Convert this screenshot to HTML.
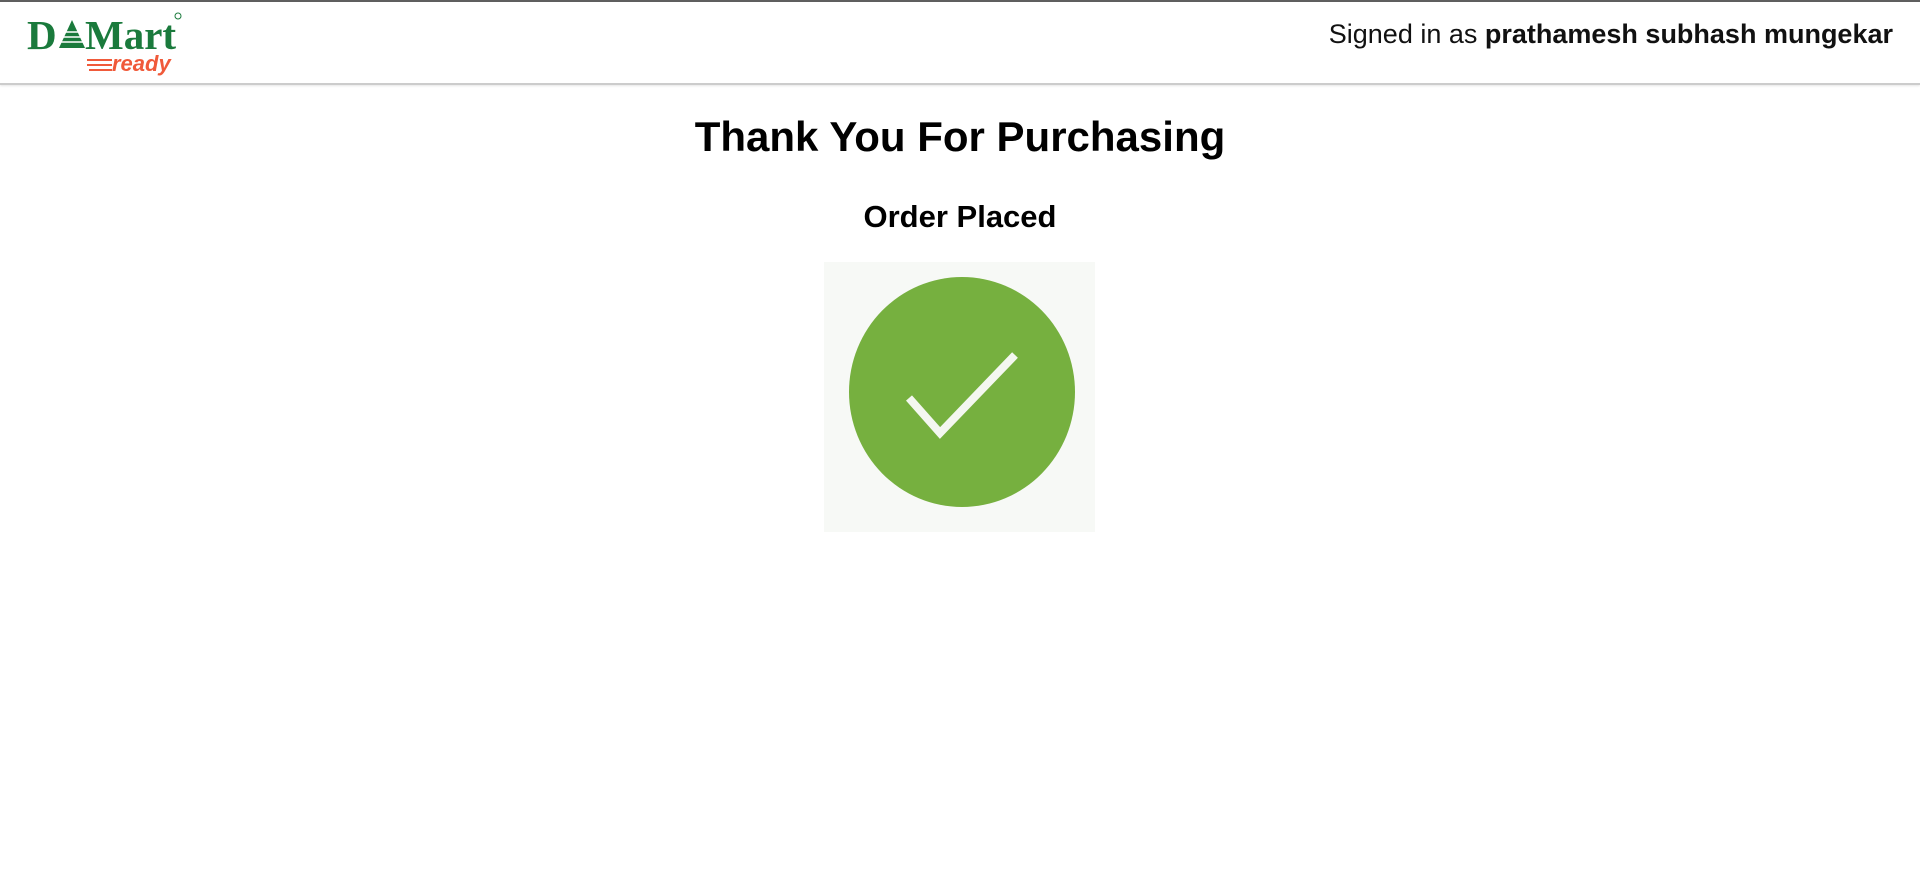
<!DOCTYPE html>
<html><head><meta charset="utf-8"><style>
body{margin:0;width:1920px;height:877px;background:#fff;font-family:"Liberation Sans",sans-serif;position:relative;overflow:hidden}
.top{position:absolute;left:0;top:0;width:1920px;height:2px;background:#5f5f5f}
.hdr{position:absolute;left:0;top:2px;width:1920px;height:81px;border-bottom:2px solid #ccc;box-shadow:0 1px 2px rgba(0,0,0,.1)}
.sign{position:absolute;right:27px;top:17px;font-size:27px;color:#111}
.sign b{font-weight:bold}
h1{position:absolute;left:0;width:1920px;text-align:center;top:113px;margin:0;font-size:42px;font-weight:bold;color:#000}
h2{position:absolute;left:0;width:1920px;text-align:center;top:199px;margin:0;font-size:31px;font-weight:bold;color:#000}
</style></head><body>
<div class="top"></div>
<div class="hdr">
<svg style="position:absolute;left:0;top:0" width="200" height="80">
<text x="27" y="47" font-family="Liberation Serif,serif" font-weight="bold" font-size="41" fill="#1a7a3c">D</text>
<polygon points="72,18 59,46 85,46" fill="#1a7a3c"/>
<g stroke="#fff" stroke-width="1.5"><line x1="60" y1="30" x2="84" y2="30"/><line x1="58" y1="35" x2="86" y2="35"/><line x1="56" y1="40" x2="88" y2="40"/></g>
<text x="85" y="47" font-family="Liberation Serif,serif" font-weight="bold" font-size="41" fill="#1a7a3c">Mart</text>
<circle cx="178" cy="14" r="3" fill="none" stroke="#1a7a3c" stroke-width="1"/>
<g stroke="#f05a3a" stroke-width="2"><line x1="87" y1="58" x2="112" y2="58"/><line x1="87" y1="63" x2="112" y2="63"/><line x1="89" y1="68" x2="112" y2="68"/></g>
<text x="112" y="69" font-family="Liberation Sans,sans-serif" font-style="italic" font-weight="bold" font-size="22" fill="#f05a3a">ready</text>
</svg>
<div class="sign">Signed in as <b>prathamesh subhash mungekar</b></div>
</div>
<h1>Thank You For Purchasing</h1>
<h2>Order Placed</h2>
<svg style="position:absolute;left:824px;top:262px" width="271" height="270">
<rect width="271" height="270" fill="#f7f9f6"/>
<ellipse cx="138" cy="130" rx="113" ry="115" fill="#76b03f"/>
<polyline points="85,136 116,171 191,93" fill="none" stroke="#f4f7f0" stroke-width="8"/>
</svg>
</body></html>
